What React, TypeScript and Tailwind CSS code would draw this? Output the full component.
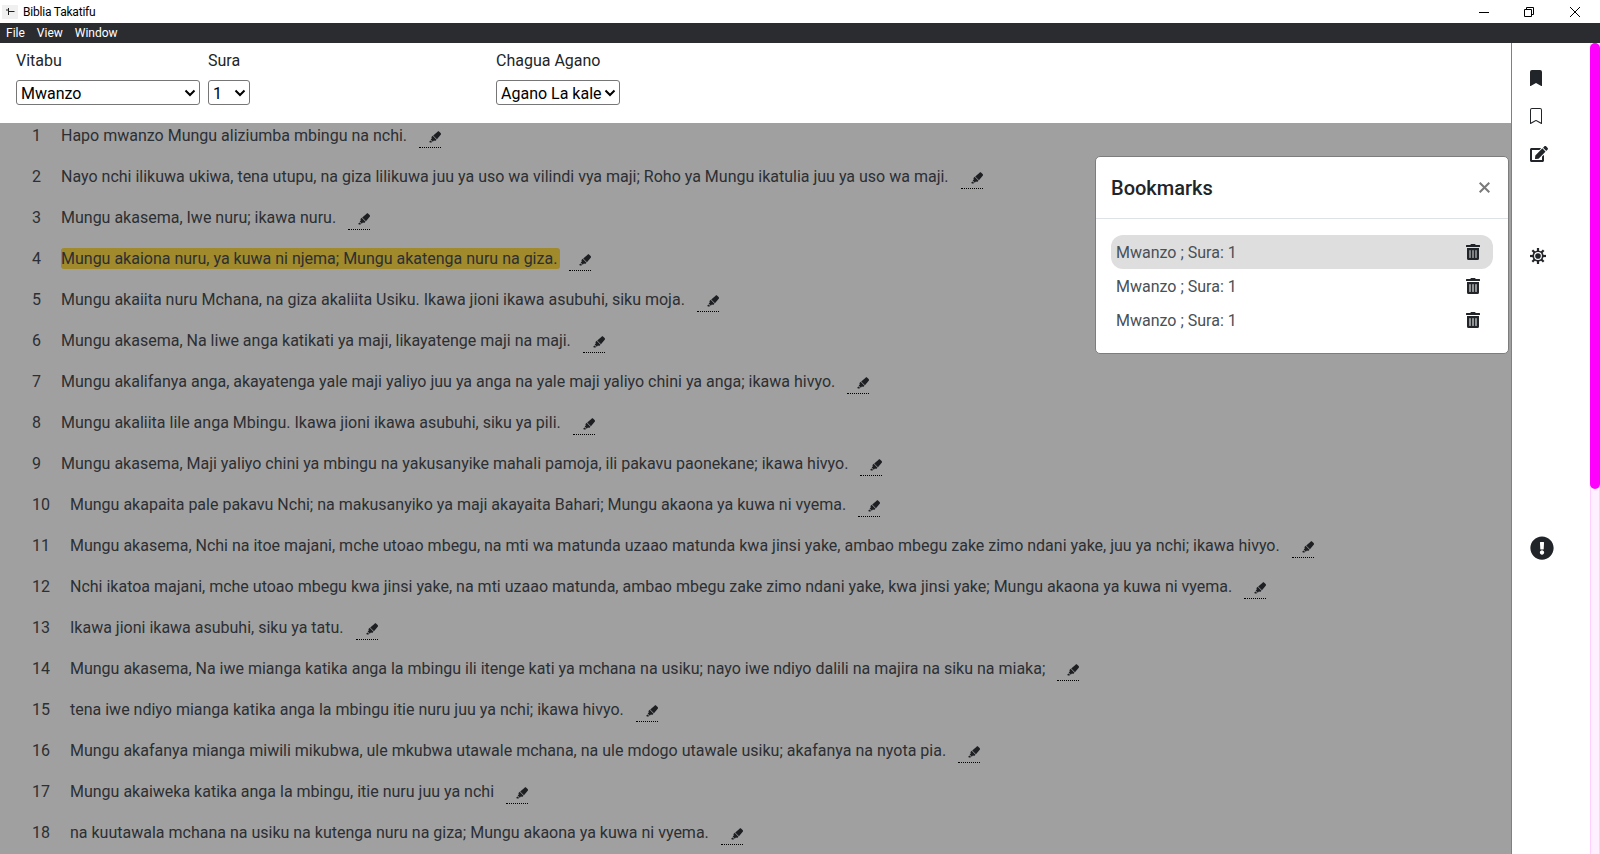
import React from "react";
import { BsBookmarkFill, BsBookmark } from "react-icons/bs";
import { FaHighlighter, FaTrashAlt, FaEdit, FaExclamationCircle } from "react-icons/fa";

const FONT = "font-['Roboto',sans-serif]";

const verses = [
  "Hapo mwanzo Mungu aliziumba mbingu na nchi.",
  "Nayo nchi ilikuwa ukiwa, tena utupu, na giza lilikuwa juu ya uso wa vilindi vya maji; Roho ya Mungu ikatulia juu ya uso wa maji.",
  "Mungu akasema, Iwe nuru; ikawa nuru.",
  "Mungu akaiona nuru, ya kuwa ni njema; Mungu akatenga nuru na giza.",
  "Mungu akaiita nuru Mchana, na giza akaliita Usiku. Ikawa jioni ikawa asubuhi, siku moja.",
  "Mungu akasema, Na liwe anga katikati ya maji, likayatenge maji na maji.",
  "Mungu akalifanya anga, akayatenga yale maji yaliyo juu ya anga na yale maji yaliyo chini ya anga; ikawa hivyo.",
  "Mungu akaliita lile anga Mbingu. Ikawa jioni ikawa asubuhi, siku ya pili.",
  "Mungu akasema, Maji yaliyo chini ya mbingu na yakusanyike mahali pamoja, ili pakavu paonekane; ikawa hivyo.",
  "Mungu akapaita pale pakavu Nchi; na makusanyiko ya maji akayaita Bahari; Mungu akaona ya kuwa ni vyema.",
  "Mungu akasema, Nchi na itoe majani, mche utoao mbegu, na mti wa matunda uzaao matunda kwa jinsi yake, ambao mbegu zake zimo ndani yake, juu ya nchi; ikawa hivyo.",
  "Nchi ikatoa majani, mche utoao mbegu kwa jinsi yake, na mti uzaao matunda, ambao mbegu zake zimo ndani yake, kwa jinsi yake; Mungu akaona ya kuwa ni vyema.",
  "Ikawa jioni ikawa asubuhi, siku ya tatu.",
  "Mungu akasema, Na iwe mianga katika anga la mbingu ili itenge kati ya mchana na usiku; nayo iwe ndiyo dalili na majira na siku na miaka;",
  "tena iwe ndiyo mianga katika anga la mbingu itie nuru juu ya nchi; ikawa hivyo.",
  "Mungu akafanya mianga miwili mikubwa, ule mkubwa utawale mchana, na ule mdogo utawale usiku; akafanya na nyota pia.",
  "Mungu akaiweka katika anga la mbingu, itie nuru juu ya nchi",
  "na kuutawala mchana na usiku na kutenga nuru na giza; Mungu akaona ya kuwa ni vyema.",
];

function Select({ value, className }: { value: string; className: string }) {
  return (
    <div className={`flex h-[25px] items-center justify-between rounded-[3px] border border-[#767676] bg-white pl-1 pr-[3px] text-[16px] text-black ${className}`}>
      <span className="pt-[2px]">{value}</span>
      <svg width="12" height="8" viewBox="0 0 12 8" fill="none" stroke="#000" strokeWidth="2">
        <path d="M1.5 1.5 6 6l4.5-4.5" />
      </svg>
    </div>
  );
}

// theme toggle in the rail, a gear with a ring cut out of the hub
function GearIcon() {
  return (
    <svg width="16" height="16" viewBox="0 0 16 16" fill="#212529">
      {[0, 45, 90, 135].map((deg) => (
        <rect key={deg} x="6.9" y="0" width="2.2" height="16" transform={`rotate(${deg} 8 8)`} />
      ))}
      <circle cx="8" cy="8" r="5.6" />
      <circle cx="8" cy="8" r="3.9" fill="#fff" />
      <circle cx="8" cy="8" r="2.8" />
    </svg>
  );
}

export default function App() {
  return (
    <div className={`flex h-[854px] w-[1600px] flex-col overflow-hidden bg-white text-[16px] text-[#212529] ${FONT}`}>
      {/* Title bar */}
      <div className="flex h-[23px] items-center bg-white text-[12px] text-black">
        <div className="ml-[2px] flex h-[14px] w-[16px] items-center justify-center bg-[#f0f0f0]">
          <svg width="9" height="7" viewBox="0 0 9 7" fill="none" stroke="#222">
            <path d="M2.5 0v7M0 2h3M2.5 3.5h6" />
          </svg>
        </div>
        <span className="ml-[5px] tracking-[-0.2px]">Biblia Takatifu</span>
        <div className="ml-auto flex items-center">
          <svg className="mr-[35px]" width="10" height="10" viewBox="0 0 10 10" stroke="#000" fill="none">
            <path d="M0 5.5h10" />
          </svg>
          <svg className="mr-[36px]" width="10" height="10" viewBox="0 0 10 10" stroke="#000" fill="none">
            <path d="M.5 2.5h7v7h-7zM2.5 2.5v-2h7v7h-2" />
          </svg>
          <svg className="mr-[20px]" width="10" height="10" viewBox="0 0 10 10" stroke="#000" fill="none">
            <path d="M0 0l10 10M10 0 0 10" />
          </svg>
        </div>
      </div>

      {/* Menu bar */}
      <div className="flex h-[20px] items-center gap-[12px] bg-[#2b2c30] pl-[6px] text-[12px] text-white">
        <span>File</span>
        <span>View</span>
        <span>Window</span>
      </div>

      <div className="flex min-h-0 flex-1">
        <div className="relative flex min-w-0 flex-1 flex-col">
          {/* Selectors */}
          <div className="flex h-[80px] shrink-0 bg-white pl-[16px] pt-[8px]">
            <div className="w-[192px]">
              <div className="mb-[9px] leading-[20px]">Vitabu</div>
              <Select value="Mwanzo" className="w-[184px]" />
            </div>
            <div className="w-[288px]">
              <div className="mb-[9px] leading-[20px]">Sura</div>
              <Select value="1" className="w-[42px]" />
            </div>
            <div>
              <div className="mb-[9px] leading-[20px]">Chagua Agano</div>
              <Select value="Agano La kale" className="w-[124px]" />
            </div>
          </div>

          {/* Verses */}
          <div className="min-h-0 flex-1 overflow-hidden bg-[#a0a0a0] pt-[1px] text-[#2c2f33]">
            {verses.map((text, i) => (
              <div key={i} className="flex h-[41px] items-start pl-[32px] pt-[1px] leading-[21px]">
                <span className="mr-[20px]">{i + 1}</span>
                <span className={i === 3 ? "rounded-[3px] bg-[#a08a2b] pr-[3px]" : ""}>{text}</span>
                <span className={`flex h-[23px] w-[22px] justify-end border-b border-dotted border-black pt-[6px] ${i === 3 ? "ml-[9px]" : "ml-[12px]"}`}>
                  <FaHighlighter size={12} className="text-[#1d1f22]" />
                </span>
              </div>
            ))}
          </div>

          {/* Bookmarks panel */}
          <div className="absolute right-[2px] top-[113px] w-[414px] rounded-[5px] border border-[#7d7d7d] bg-white">
            <div className="flex h-[62px] items-center justify-between border-b border-[#dee2e6] pl-[15px] pr-[18px]">
              <span className="text-[20px] font-medium text-[#212529]">Bookmarks</span>
              <svg width="11" height="11" viewBox="0 0 11 11" stroke="#7a7a7a" strokeWidth="2" fill="none">
                <path d="M.7.7l9.6 9.6M10.3.7.7 10.3" />
              </svg>
            </div>
            <div className="flex flex-col px-[15px] py-[16px]">
              {[0, 1, 2].map((n) => (
                <div key={n} className={`flex h-[34px] items-center justify-between rounded-[12px] pl-[5px] pr-[12px] text-[#495057] ${n === 0 ? "bg-[#dedede]" : ""}`}>
                  <span className="pt-[1px]">Mwanzo ; Sura: 1</span>
                  <FaTrashAlt size={16} className="text-[#212529]" />
                </div>
              ))}
            </div>
          </div>
        </div>

        {/* Right rail */}
        <div className="relative w-[89px] shrink-0 border-l border-[#e040d0] bg-white">
          <div className="flex flex-col items-start pl-[16px] pt-[27px] text-[#212529]">
            <BsBookmarkFill size={16} />
            <BsBookmark size={16} className="mt-[22px]" />
            <FaEdit size={18} className="ml-[2px] mt-[21px]" />
            <div className="ml-[2px] mt-[85px]">
              <GearIcon />
            </div>
            <FaExclamationCircle size={24} className="ml-[2px] mt-[272px]" />
          </div>
          <div className="absolute inset-y-0 right-0 w-[10px] border-x border-[#ffd0ff] bg-[#fff0ff]">
            <div className="-mx-px h-[446px] rounded-[5px] bg-[#ff00ff]" />
          </div>
        </div>
      </div>
    </div>
  );
}
